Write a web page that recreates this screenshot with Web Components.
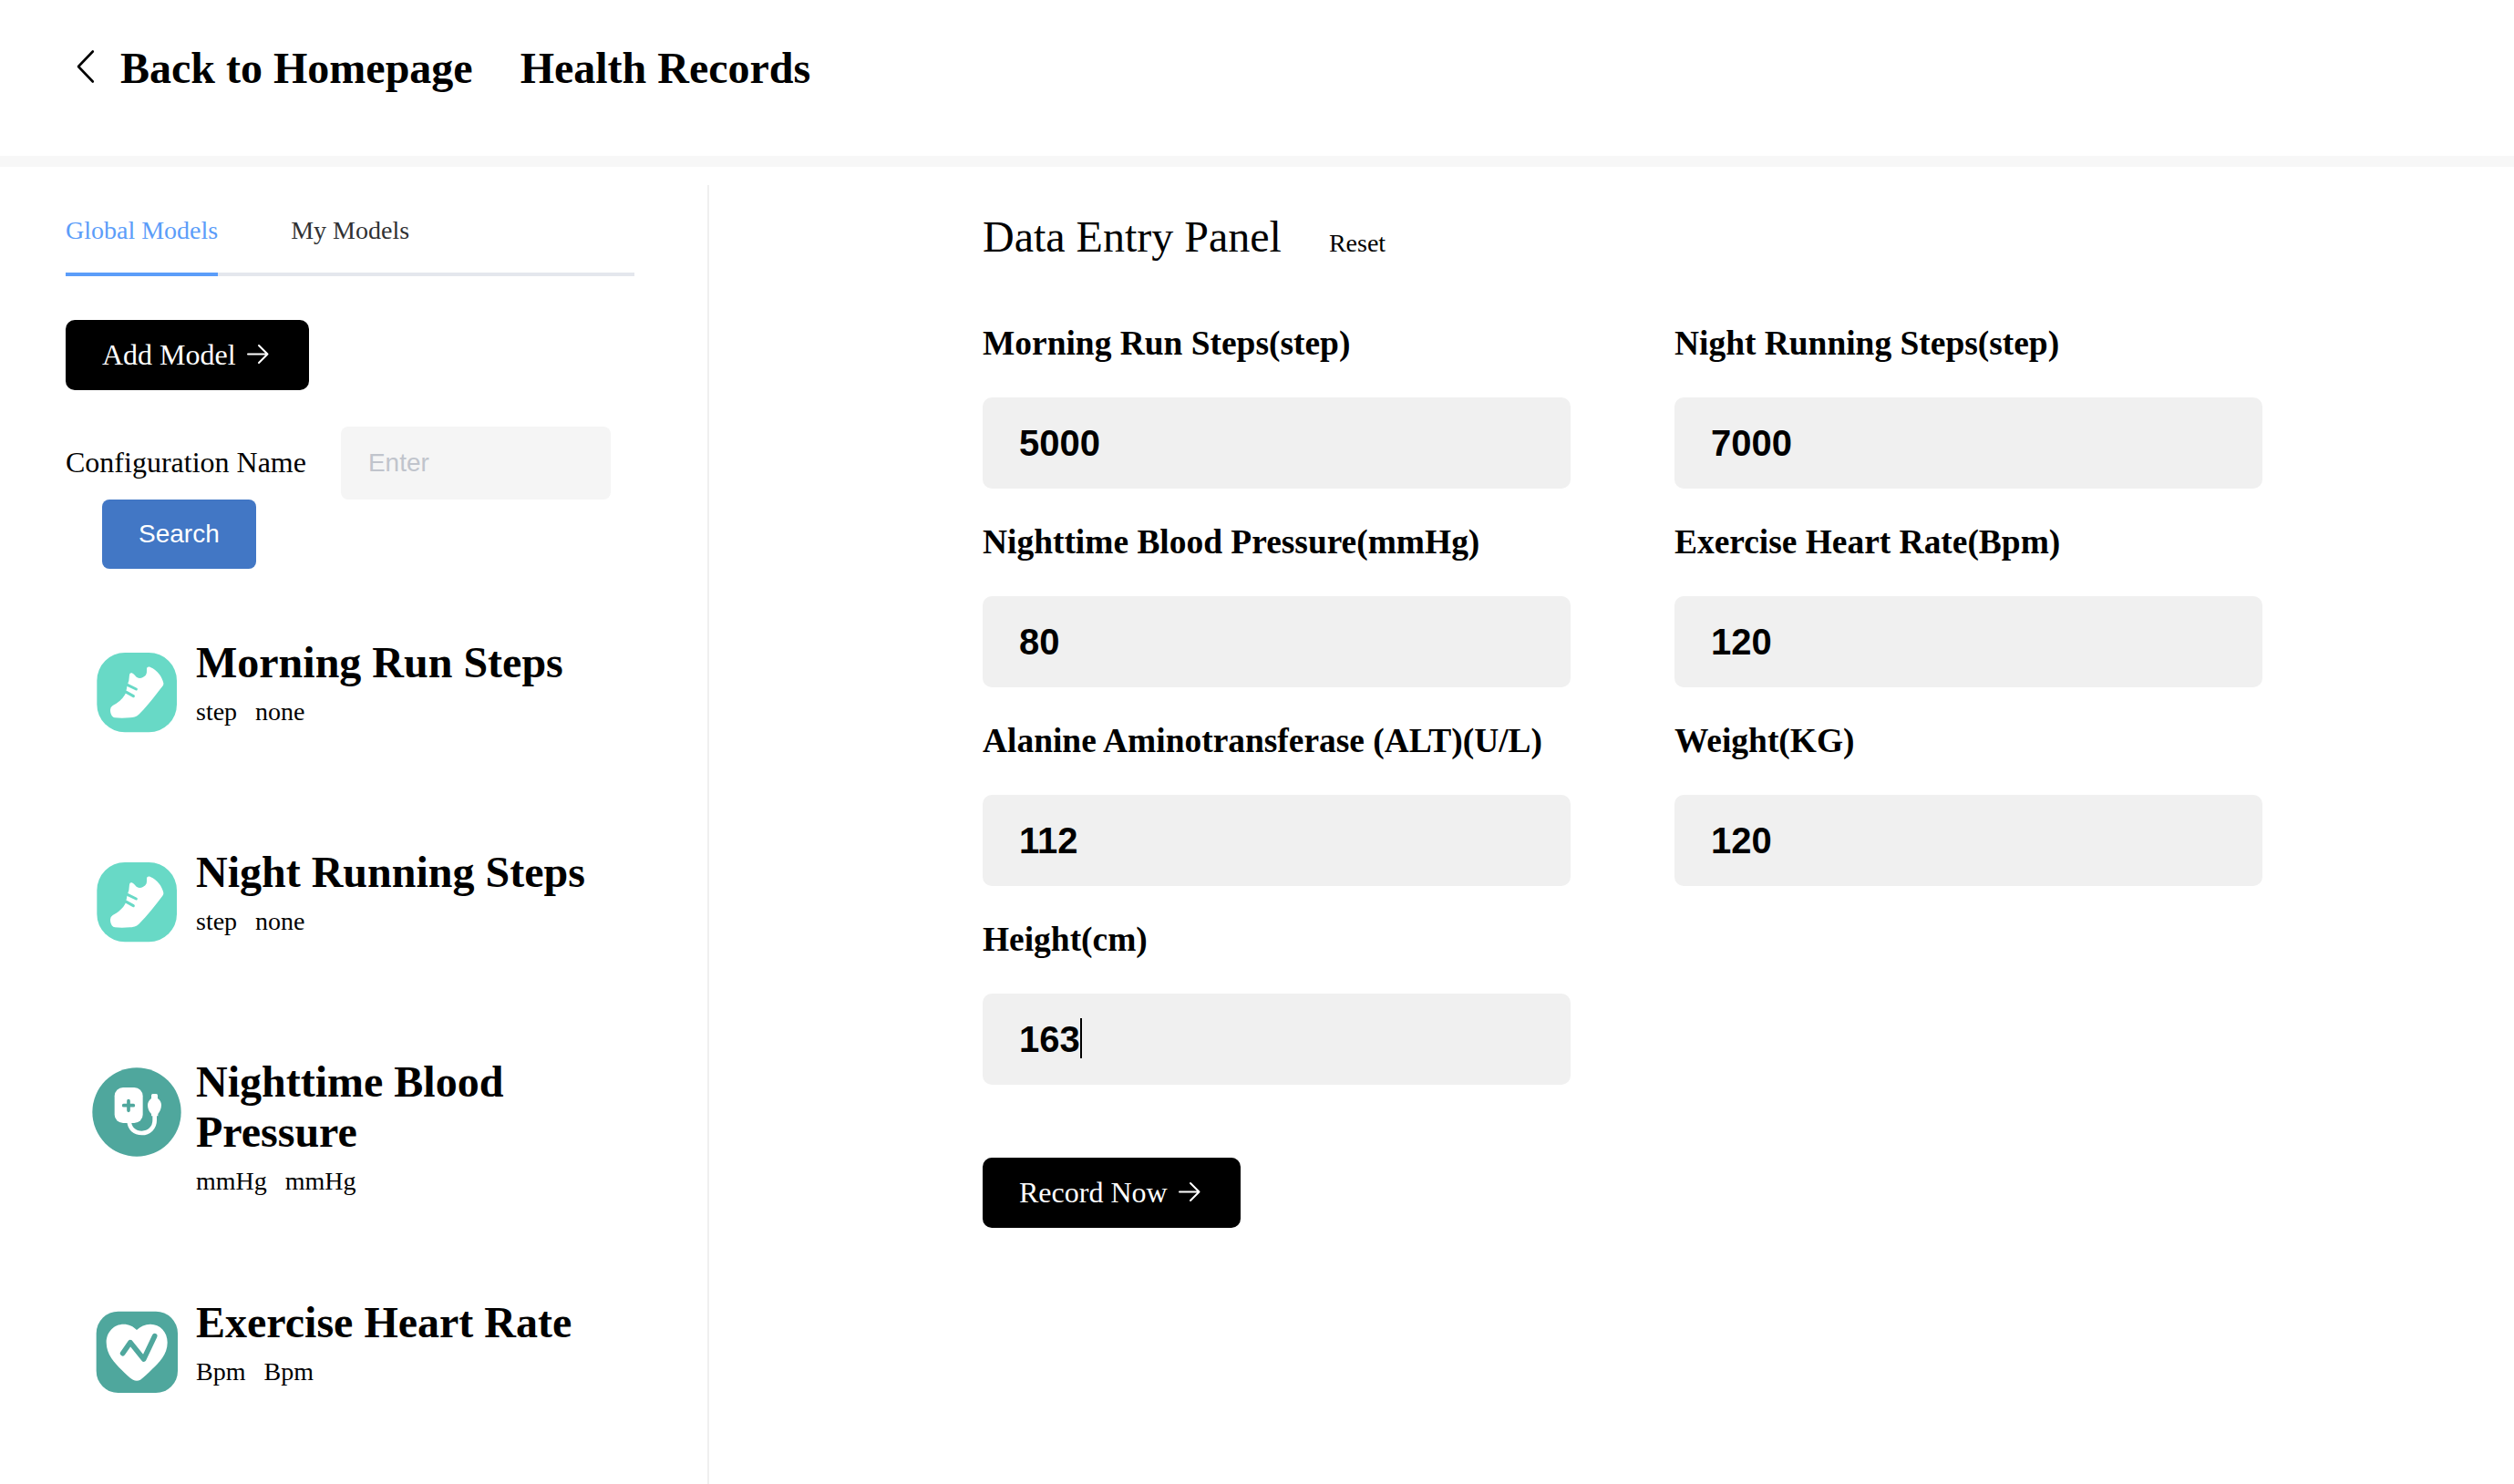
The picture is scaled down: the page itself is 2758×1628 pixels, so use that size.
<!DOCTYPE html>
<html lang="en">
<head>
<meta charset="utf-8">
<title>Health Records</title>
<style>
  html { font: 32px "Liberation Serif", "Times New Roman", serif; color: #000; background: #fff; }
  body { margin: 0; }
</style>
</head>
<body>
<health-app>
  <page-header slot="header"></page-header>
  <model-sidebar slot="side">
    <model-item icon="shoe" name="Morning Run Steps"><span>step</span><span>none</span></model-item>
    <model-item icon="shoe" name="Night Running Steps"><span>step</span><span>none</span></model-item>
    <model-item icon="pressure" name="Nighttime Blood Pressure"><span>mmHg</span><span>mmHg</span></model-item>
    <model-item icon="heart" name="Exercise Heart Rate"><span>Bpm</span><span>Bpm</span></model-item>
  </model-sidebar>
  <entry-panel slot="main">
    <record-field label="Morning Run Steps(step)" value="5000"></record-field>
    <record-field label="Night Running Steps(step)" value="7000"></record-field>
    <record-field label="Nighttime Blood Pressure(mmHg)" value="80"></record-field>
    <record-field label="Exercise Heart Rate(Bpm)" value="120"></record-field>
    <record-field label="Alanine Aminotransferase (ALT)(U/L)" value="112"></record-field>
    <record-field label="Weight(KG)" value="120"></record-field>
    <record-field label="Height(cm)" value="163" active></record-field>
  </entry-panel>
</health-app>

<script>
const define = (name, html, setup) => customElements.define(name, class extends HTMLElement {
  constructor() {
    super();
    this.attachShadow({ mode: 'open' }).innerHTML = html;
  }
  connectedCallback() { if (setup) setup(this, this.shadowRoot); }
});

define('health-app', `
  <style>
    :host { display: flex; flex-direction: column; min-height: 100vh; }
    .body { display: flex; flex: 1; }
    ::slotted([slot=side]) { flex: 0 0 778px; }
    ::slotted([slot=main]) { flex: 1; min-width: 0; }
  </style>
  <slot name="header"></slot>
  <div class="body"><slot name="side"></slot><slot name="main"></slot></div>`);

define('page-header', `
  <style>
    :host { display: block; border-bottom: 12px solid #f7f7f7; }
    header { display: flex; align-items: center; gap: 52px; padding: 47px 72px 69px; }
    a { display: flex; align-items: center; gap: 12px; color: inherit; text-decoration: none; }
    a, h1 { margin: 0; font-size: 48px; font-weight: bold; line-height: 55px; }
    svg { width: 48px; height: 48px; }
  </style>
  <header>
    <a href="#home">
      <svg viewBox="0 0 48 48" fill="none" stroke="currentColor" stroke-width="2.600" stroke-linecap="round" stroke-linejoin="round" aria-hidden="true"><path d="M29.800 5.500 14 22 29.800 38.500"/></svg>
      <span>Back to Homepage</span>
    </a>
    <h1>Health Records</h1>
  </header>`);

define('arrow-button', `
  <style>
    :host { display: block; }
    button { display: flex; align-items: center; gap: 8px; margin: 0; padding: 20px 40px; border: 0; border-radius: 10px;
      background: #000; color: #fff; font: inherit; font-size: 32px; line-height: 37px; cursor: pointer; }
    svg { width: 32px; height: 32px; }
  </style>
  <button type="button"><slot></slot>
    <svg viewBox="0 0 32 32" fill="none" stroke="currentColor" stroke-width="2" stroke-linecap="round" stroke-linejoin="round" aria-hidden="true"><path d="M5 14.500h21.500M17 5l9.500 9.500-9.500 9.500"/></svg>
  </button>`);

define('model-sidebar', `
  <style>
    :host { display: block; box-sizing: border-box; margin-top: 20px; padding: 34px 80px 0 72px; border-right: 2px solid #efefef; }
    nav { display: flex; gap: 80px; border-bottom: 4px solid #e4e7ed; }
    nav a { margin-bottom: -4px; padding-bottom: 30px; border-bottom: 4px solid transparent; font-size: 28px; line-height: 32px;
      color: #303133; text-decoration: none; }
    nav a[aria-current] { color: #5b9df9; border-color: #5b9df9; }
    arrow-button { margin-top: 48px; }
    form { display: flex; flex-wrap: wrap; align-items: flex-start; margin-top: 40px; }
    label { margin-right: 38px; line-height: 78px; }
    input, button { box-sizing: border-box; border: 0; font: 28px "Liberation Sans", Arial, sans-serif; border-radius: 8px; }
    input { width: 296px; height: 80px; padding: 0 30px; background: #f5f5f5; }
    input::placeholder { color: #c0c4cc; opacity: 1; }
    button { height: 76px; margin-left: 40px; padding: 0 40px; background: #4277c5; color: #fff; cursor: pointer; }
    .list { display: flex; flex-direction: column; gap: 110px; margin-top: 75px; }
  </style>
  <nav><a href="#global" aria-current="page">Global Models</a><a href="#mine">My Models</a></nav>
  <arrow-button>Add Model</arrow-button>
  <form>
    <label for="q">Configuration Name</label>
    <input id="q" type="text" placeholder="Enter">
    <button type="button">Search</button>
  </form>
  <div class="list"><slot></slot></div>`);

const icons = {
  shoe: `
    <rect x="49" y="51" width="263" height="262" rx="92" fill="#68d9c6"/>
    <path fill="#fff" d="M156 124q1-8 8-6c6 2 9 8 15 13q13 8 25-1c10-7 9-14 9-25 0-7 6-9 12-6 22 8 39 32 43 52q1 6-3 10c-24 31-50 66-78 93-9 8-18 10-29 11-18 2-36 2-50 0-10-2-15-14-15-26q0-9 8-14c18-9 34-22 43-41l5-26 5-15z"/>
    <path d="M151 158l27 13M146 181l23 13" stroke="#68d9c6" stroke-width="9" stroke-linecap="round" fill="none"/>`,
  pressure: `
    <circle cx="180" cy="183" r="146" fill="#4fa79d"/>
    <rect x="107" y="102" width="93" height="117" rx="28" fill="#fff"/>
    <path d="M153 146v32M137 161h32" stroke="#4fa79d" stroke-width="11" stroke-linecap="round"/>
    <path d="M155 213c1 24 18 39 42 39s42-18 42-42v-24" fill="none" stroke="#fff" stroke-width="14"/>
    <path fill="#fff" d="M228 128q0-5 5-5h11q5 0 5 5v10c8 5 12 13 12 22 0 12-5 22-11 29v7h-22v-7c-7-7-12-17-12-29 0-9 5-17 12-22z"/>`,
  heart: `
    <rect x="47" y="47" width="268" height="268" rx="72" fill="#4fa79d"/>
    <path fill="#fff" d="M180 108c-11-12-26-19-43-19-32 0-57 26-57 60 0 40 28 68 50 90 13 13 26 26 38 33q12 6 24 0c12-9 25-21 38-34 23-23 51-49 51-89 0-34-24-60-56-60-18 0-33 7-45 19z"/>
    <path d="M134 185l25-36 44 55 36-76" fill="none" stroke="#4fa79d" stroke-width="17" stroke-linecap="round" stroke-linejoin="round"/>`
};

define('model-item', `
  <style>
    :host { display: flex; align-items: flex-start; gap: 5px; padding-left: 18px; }
    svg { flex: none; width: 120px; height: 120px; }
    h2 { margin: 0; font-size: 48px; line-height: 55px; }
    .units { display: flex; gap: 20px; margin-top: 10px; font-size: 28px; line-height: 34px; }
  </style>
  <svg viewBox="0 0 360 360" aria-hidden="true"></svg>
  <div><h2></h2><div class="units"><slot></slot></div></div>`,
  (el, root) => {
    root.querySelector('svg').innerHTML = icons[el.getAttribute('icon')];
    root.querySelector('h2').textContent = el.getAttribute('name');
  });

define('entry-panel', `
  <style>
    :host { display: block; box-sizing: border-box; padding: 49px 276px 80px 300px; }
    .head { display: flex; align-items: baseline; gap: 52px; margin-bottom: 68px; }
    h1 { margin: 0; font-size: 48px; font-weight: normal; line-height: 55px; }
    .head button { margin: 0; padding: 0; border: 0; background: none; color: inherit; font: inherit; font-size: 28px; line-height: 32px; cursor: pointer; }
    .grid { display: grid; grid-template-columns: 1fr 1fr; gap: 37px 114px; margin-bottom: 80px; }
  </style>
  <div class="head"><h1>Data Entry Panel</h1><button type="reset">Reset</button></div>
  <div class="grid"><slot></slot></div>
  <arrow-button>Record Now</arrow-button>`);

define('record-field', `
  <style>
    :host { display: block; }
    h3 { margin: 0 0 38px; line-height: 43px; }
    .box { position: relative; }
    input { display: block; box-sizing: border-box; width: 100%; height: 100px; padding: 0 40px; border: 0; border-radius: 10px;
      background: #f0f0f0; color: #000; font: bold 40px "Liberation Sans", Arial, sans-serif; }
    .caret { display: none; position: absolute; left: 107px; top: 27px; width: 2px; height: 44px; background: #000; }
    :host([active]) .caret { display: block; }
  </style>
  <h3><label for="v"></label></h3>
  <div class="box"><input id="v" type="text" inputmode="numeric"><span class="caret"></span></div>`,
  (el, root) => {
    root.querySelector('label').textContent = el.getAttribute('label');
    root.querySelector('input').value = el.getAttribute('value');
  });
</script>
</body>
</html>
